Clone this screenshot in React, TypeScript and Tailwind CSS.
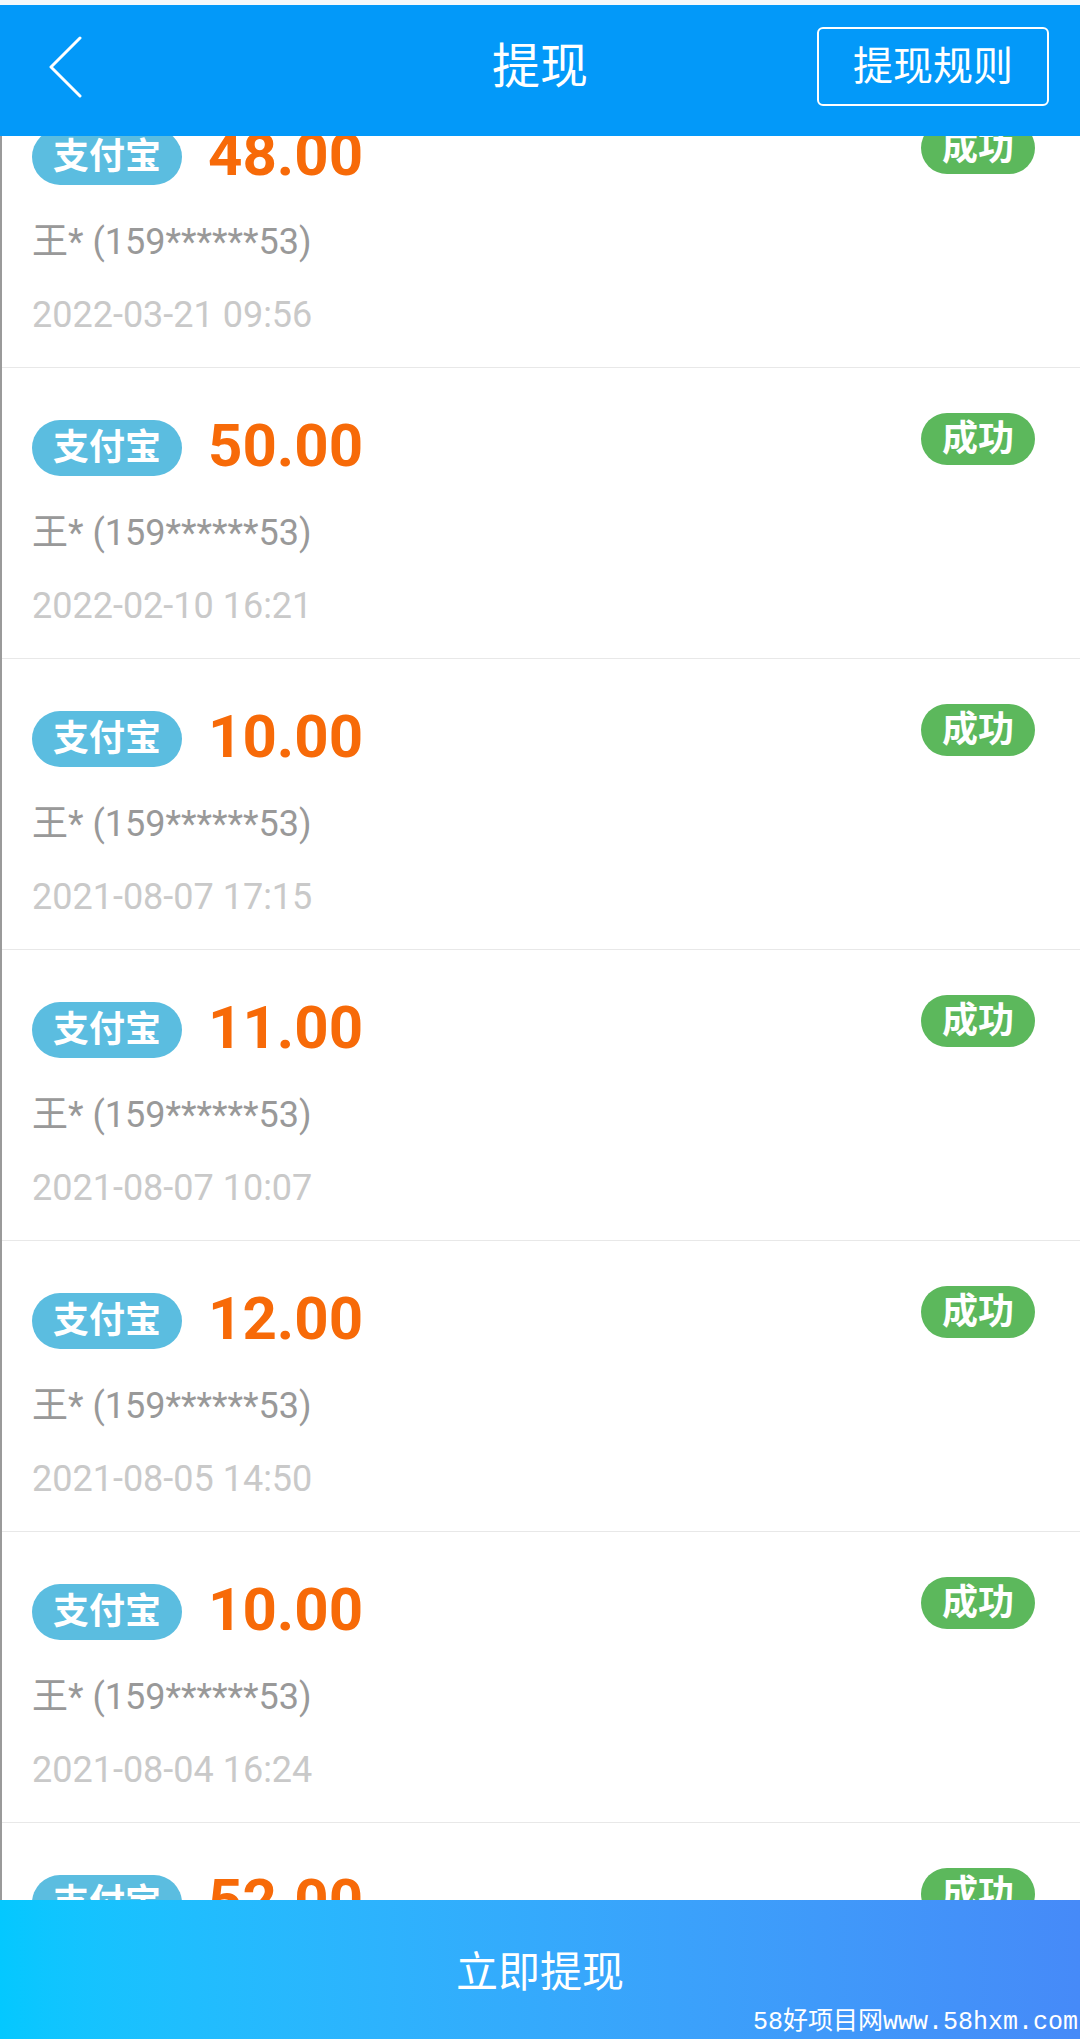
const records = [
  { amount: "48.00", date: "2022-03-21 09:56" },
  { amount: "50.00", date: "2022-02-10 16:21" },
  { amount: "10.00", date: "2021-08-07 17:15" },
  { amount: "11.00", date: "2021-08-07 10:07" },
  { amount: "12.00", date: "2021-08-05 14:50" },
  { amount: "10.00", date: "2021-08-04 16:24" },
  { amount: "52.00", date: "2021-08-03 11:42" },
];

function RecordRow({ amount, date }: { amount: string; date: string }) {
  return (
    <div className="h-[291px] shrink-0 border-b border-[#e8e8e8] pl-[30px] pr-[45px] pt-[45px] flex flex-col">
      <div className="flex items-start justify-between">
        <div className="mt-[7px] h-[56px] flex items-center gap-[26px]">
          <span className="h-[56px] px-[21px] rounded-full bg-[#5bbde0] text-white text-[36px] font-bold leading-[56px]">
            支付宝
          </span>
          <span className="pb-[4px] text-[60px] font-bold leading-none text-[#f76a08]">
            {amount}
          </span>
        </div>
        <span className="h-[52px] px-[21px] rounded-full bg-[#5cb85c] text-white text-[36px] font-bold leading-[52px]">
          成功
        </span>
      </div>
      <div className="mt-[37px] text-[36px] leading-[40px] text-[#999999]">
        王* (159******53)
      </div>
      <div className="mt-[33px] text-[36px] leading-[40px] text-[#c9c9c9]">
        {date}
      </div>
    </div>
  );
}

export default function App() {
  return (
    <div className="w-[1080px] h-[2039px] flex flex-col overflow-hidden bg-white font-['Roboto','Noto_Sans_CJK_SC',sans-serif]">
      <div className="h-[5px] shrink-0 bg-[#f4f8fb]" />
      <header className="h-[131px] shrink-0 bg-[#0399f9] grid grid-cols-[1fr_auto_1fr] items-center pb-[8px] text-white">
        <div className="pl-[48px]">
          <svg width="34" height="62" viewBox="0 0 34 62" fill="none">
            <path d="M32 2 L3 31 L32 60" stroke="white" strokeWidth="3" strokeLinecap="round" strokeLinejoin="round" />
          </svg>
        </div>
        <h1 className="text-[48px] leading-none font-normal">提现</h1>
        <div className="flex justify-end pr-[31px]">
          <button className="h-[79px] w-[232px] border-2 border-white rounded-[6px] text-[40px] leading-none">
            提现规则
          </button>
        </div>
      </header>
      <div className="flex-1 overflow-hidden border-l-2 border-[#9a9a9a]">
        <div className="-mt-[59px] flex flex-col">
          {records.map((r, i) => (
            <RecordRow key={i} amount={r.amount} date={r.date} />
          ))}
        </div>
      </div>
      <div className="relative h-[139px] shrink-0 bg-linear-to-r from-[#03c8ff] to-[#468af8] flex items-center justify-center">
        <span className="text-white text-[42px] leading-none pt-[6px]">立即提现</span>
        <span className="absolute right-[2px] bottom-[4px] text-white text-[25px] leading-none font-['Liberation_Mono','Noto_Sans_CJK_SC',monospace]">
          58好项目网www.58hxm.com
        </span>
      </div>
    </div>
  );
}
